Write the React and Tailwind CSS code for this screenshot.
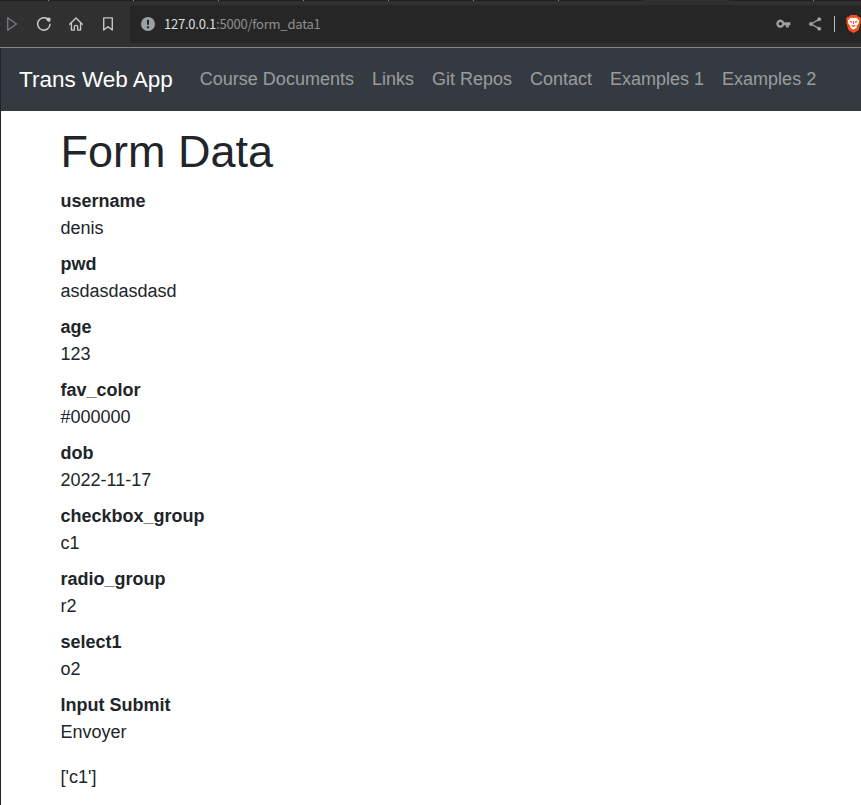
import React from "react";

const links = ["Course Documents", "Links", "Git Repos", "Contact", "Examples 1", "Examples 2"];

const fields = [
  ["username", "denis"],
  ["pwd", "asdasdasdasd"],
  ["age", "123"],
  ["fav_color", "#000000"],
  ["dob", "2022-11-17"],
  ["checkbox_group", "c1"],
  ["radio_group", "r2"],
  ["select1", "o2"],
  ["Input Submit", "Envoyer"],
];

const tabs = [
  "w-[49px] border-r",
  "w-[85px] border-r",
  "w-[85px] border-r",
  "w-[85px] border-r",
  "w-[85px] border-r",
  "w-[85px] border-r",
  "w-[85px] border-r",
  "w-[84px]",
  "w-[86px] bg-[#303030]",
  "w-[85px] border-r",
];

function TabEdge() {
  return (
    <div className="flex h-px bg-[#1f1f1f]">
      {tabs.map((t, i) => (
        <div key={i} className={`h-px shrink-0 border-[#8a8a8a] ${t}`} />
      ))}
    </div>
  );
}

function Toolbar() {
  return (
    <div className="flex h-[46px] items-center bg-[#303030]">
      <svg className="ml-1 shrink-0" width="16" height="16" viewBox="0 0 16 16" fill="none" stroke="#74747f" strokeWidth="1.5" strokeLinejoin="round">
        <path d="M3.7 1.8v12.4L12.6 8z" />
      </svg>
      <svg className="ml-4 shrink-0" width="16" height="16" viewBox="0 0 16 16" fill="none" stroke="#cacaca" strokeWidth="1.5" strokeLinecap="round">
        <path d="M14 8.2A6.2 6.2 0 1 1 11.4 2.9" />
        <path d="M10.3 1.8h3.9v3.9a3.9 3.9 0 0 1-3.9-3.9z" fill="#cacaca" stroke="none" />
        <circle cx="12.6" cy="3.6" r="1.9" fill="#cacaca" stroke="none" />
      </svg>
      <svg className="ml-4 shrink-0" width="16" height="16" viewBox="0 0 16 16" fill="none" stroke="#c6c6c6" strokeWidth="1.4" strokeLinejoin="round" strokeLinecap="round">
        <path d="M1.7 8.2 8 1.9l6.3 6.3" />
        <path d="M3.4 7.2v6.9h2.9v-3a1.7 1.7 0 0 1 3.4 0v3h2.9V7.2" />
      </svg>
      <svg className="ml-4 shrink-0" width="16" height="16" viewBox="0 0 16 16" fill="none" stroke="#c6c6c6" strokeWidth="1.4" strokeLinejoin="round">
        <path d="M3.7 1.9h8.6v12.1L8 10.8 3.7 14z" />
      </svg>
      <div className="ml-[14px] flex h-[38px] flex-1 items-center overflow-hidden rounded-l bg-[#262626]">
        <svg className="ml-[11px] shrink-0" width="14" height="14" viewBox="0 0 14 14">
          <circle cx="7" cy="7" r="7" fill="#9aa0a6" />
          <path d="M6 2.8h2v5H6zM6 9.2h2v2H6z" fill="#262626" />
        </svg>
        <div className="ml-[9px] flex-1 whitespace-nowrap font-['Noto_Sans_CJK_SC',sans-serif] text-[13px] leading-5 tracking-[-0.23px] text-[#8f8f8f]">
          <span className="text-[#dedede]">127.0.0.1</span>:5000/form_data1
        </div>
        <svg className="shrink-0" width="16" height="16" viewBox="0 0 16 16" fill="#a0a0a0">
          <path fillRule="evenodd" d="M9.2 6.2A4.1 4.1 0 1 0 9.2 9.2H10.9V11.4H13.8V9.2H15.4V6.2zM5.4 5.9a1.8 1.8 0 1 1 0 3.6 1.8 1.8 0 0 1 0-3.6z" />
        </svg>
        <svg className="ml-4 shrink-0" width="16" height="16" viewBox="0 0 16 16" fill="#a0a0a0" stroke="#a0a0a0">
          <path d="M12.2 3.4 4 8l8.2 4.6" fill="none" strokeWidth="1.3" />
          <circle cx="12.2" cy="3.2" r="1.8" strokeWidth=".4" />
          <circle cx="4" cy="8" r="1.8" strokeWidth=".4" />
          <circle cx="12.2" cy="12.8" r="1.8" strokeWidth=".4" />
        </svg>
        <div className="ml-[11px] h-4 w-px shrink-0 bg-[#bcbcbc]" />
        <svg className="ml-[11px] shrink-0" width="15" height="18" viewBox="0 0 16 18" preserveAspectRatio="none">
          <path d="M4.7 0h6.6l1.6 1.8 1.9-.1 1.2 2.8-.6 1.7.3 1-2.1 7.3-1.1 1.3L8 18l-4.5-2.2-1.1-1.3L.3 7.2l.3-1L0 4.5l1.2-2.8 1.9.1z" fill="#f4511e" />
          <path d="M4.8 2.7 8 3.1l3.2-.4 2.8 2.7-.4 2.9-2.5 2.9.4 1.4L8 14.7l-3.5-2.1.4-1.4-2.5-2.9L2 5.4z" fill="#fff" />
          <path d="m3.6 5.8 2.8.6-.2 1.5-2-1zM12.4 5.8l-2.8.6.2 1.5 2-1zM7.5 6h1v3h-1zM5.8 9.8 8 10.6l2.2-.8-.5 1.5L8 12l-1.7-.7z" fill="#f4511e" />
        </svg>
      </div>
    </div>
  );
}

export default function App() {
  return (
    <div className="h-[805px] w-full overflow-hidden bg-white font-['Liberation_Sans',Arial,sans-serif] text-[18px] leading-[27px] text-[#212529]">
      <TabEdge />
      <Toolbar />
      <div className="h-px bg-[#868686]" />
      <div className="h-[757px] border-l border-[#222222]">
        <nav className="flex h-[63px] items-center bg-[#343a40] px-[18px]">
          <a className="mr-[18px] whitespace-nowrap text-[22.5px] leading-[33.75px] text-white">Trans Web App</a>
          <div className="flex">
            {links.map((l) => (
              <a key={l} className="whitespace-nowrap px-[9px] text-white/50">{l}</a>
            ))}
          </div>
        </nav>
        <main className="pl-[59.5px] pt-[13.5px]">
          <h1 className="mb-[9px] text-[45px] font-medium leading-[54px]">Form Data</h1>
          <dl className="mb-[9px]">
            {fields.map(([name, value]) => (
              <React.Fragment key={name}>
                <dt className="font-bold">{name}</dt>
                <dd className="mb-[9px]">{value}</dd>
              </React.Fragment>
            ))}
          </dl>
          <p className="pt-[9px]">['c1']</p>
        </main>
      </div>
    </div>
  );
}
